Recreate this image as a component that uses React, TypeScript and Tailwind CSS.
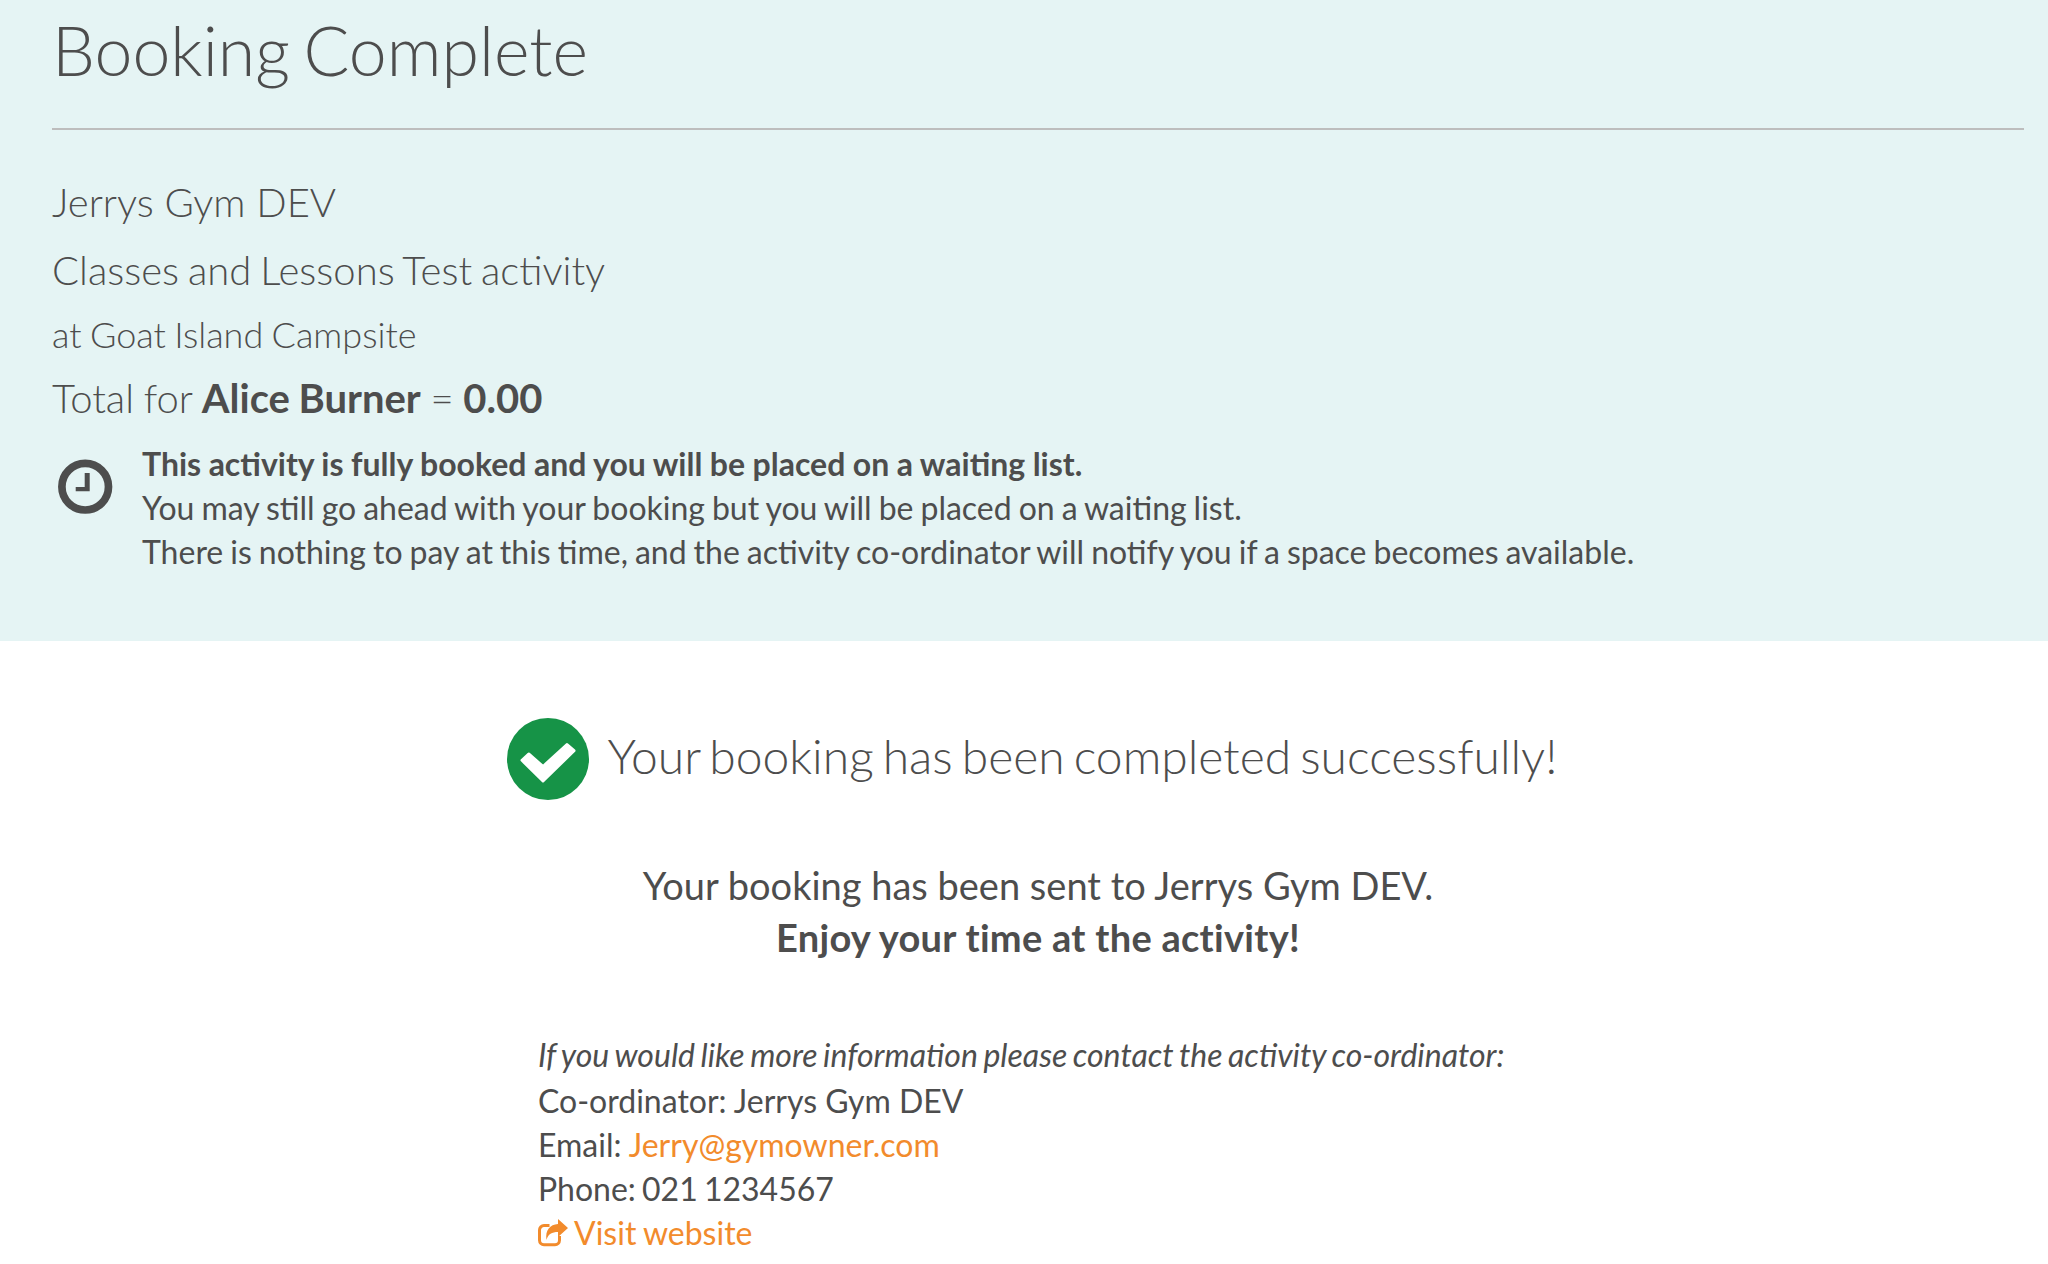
import React from 'react';

const ClockIcon: React.FC = () => (
  <svg viewBox="0 0 55 56" className="w-[55px] h-[56px] shrink-0" fill="none">
    <circle cx="27.2" cy="27.7" r="23.3" stroke="#4d4d4d" strokeWidth="7.7" />
    <path d="M26.7 14h5v18.300h-14V28h9z" fill="#4d4d4d" />
  </svg>
);

const CheckIcon: React.FC = () => (
  <svg viewBox="0 0 82 82" className="w-[82px] h-[82px] shrink-0">
    <circle cx="41" cy="41" r="41" fill="#169347" />
    <path d="M15 42.300L21.700 36 36 48.500 60 26.500l7 6.200L36 63z" fill="#fff" stroke="#fff" strokeWidth="3" strokeLinejoin="round" />
  </svg>
);

const ShareIcon: React.FC = () => (
  <svg viewBox="0 0 30 28" className="w-[30px] h-[28px] inline-block" fill="none">
    <path d="M11.500 6.500H6A4.500 4.500 0 0 0 1.500 11v10.300a4.500 4.500 0 0 0 4.500 4.500h11a4.500 4.500 0 0 0 4.500-4.500V17" stroke="#f28b2c" strokeWidth="3" />
    <path d="M20 0l10 9-10 9v-5c-6 0-10 2-11.500 8C7 11 12 5.500 20 5z" fill="#f28b2c" />
  </svg>
);

export default function App() {
  return (
    <div className="min-h-[1264px] bg-white font-['Lato',sans-serif] text-[#4d4d4d] overflow-hidden">
      <section className="h-[641px] bg-[#e5f4f4] pl-[52px] pr-[24px]">
        <h1 className="text-[68px] leading-[100px] font-light border-b-2 border-[#bdbdbd] h-[130px] [word-spacing:-5px]">Booking Complete</h1>
        <div className="pt-[38px] font-light">
          <p className="text-[40px] leading-[68px]">Jerrys Gym DEV</p>
          <p className="text-[40px] leading-[68px] [word-spacing:-2px]">Classes and Lessons Test activity</p>
          <p className="text-[36px] leading-[60px] [word-spacing:-1.4px]">at Goat Island Campsite</p>
          <p className="text-[40px] leading-[68px] [word-spacing:-1.2px]">
            Total for <b className="font-bold">Alice Burner</b> = <b className="font-bold">0.00</b>
          </p>
        </div>
        <div className="flex mt-[10px] pl-[6px] gap-[29px]">
          <div className="pt-[17px]">
            <ClockIcon />
          </div>
          <div className="text-[32px] leading-[44px] [word-spacing:-1.2px]">
            <p className="font-bold [word-spacing:-0.3px]">This activity is fully booked and you will be placed on a waiting list.</p>
            <p>You may still go ahead with your booking but you will be placed on a waiting list.</p>
            <p>There is nothing to pay at this time, and the activity co-ordinator will notify you if a space becomes available.</p>
          </div>
        </div>
      </section>
      <section className="pl-[52px] pr-[24px] pt-[77px]">
        <div className="flex items-center justify-center gap-[19px] pr-[12px] h-[82px] font-light text-[48px] [word-spacing:-4px]">
          <CheckIcon />
          <span className="pb-[7px]">Your booking has been completed successfully!</span>
        </div>
        <div className="text-center text-[38px] leading-[52px] mt-[59px]">
          <p>Your booking has been sent to Jerrys Gym DEV.</p>
          <p className="font-bold tracking-[0.28px]">Enjoy your time at the activity!</p>
        </div>
        <div className="ml-[486px] mt-[70px] text-[32px] leading-[44px]">
          <p className="italic mb-[2px] [word-spacing:-2px]">If you would like more information please contact the activity co-ordinator:</p>
          <p>Co-ordinator: Jerrys Gym DEV</p>
          <p>
            Email: <a className="text-[#f28b2c]">Jerry@gymowner.com</a>
          </p>
          <p className="[word-spacing:-2px]">Phone: 021 1234567</p>
          <a className="text-[#f28b2c] flex items-center gap-[6px] [word-spacing:-1px]">
            <ShareIcon />
            Visit website
          </a>
        </div>
      </section>
    </div>
  );
}
